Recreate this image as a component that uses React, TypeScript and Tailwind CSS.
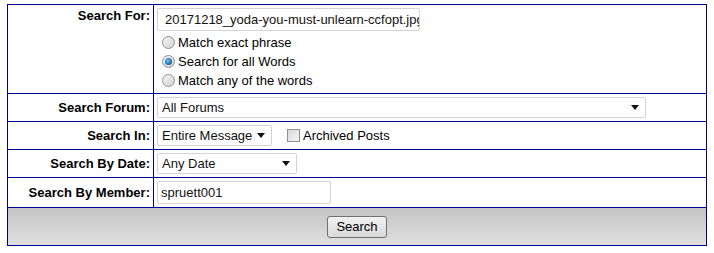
import React from "react";

const font = { fontFamily: '"Liberation Sans", Arial, sans-serif' };

function Radio({ checked }: { checked?: boolean }) {
  return (
    <span className="relative ml-[5px] mr-[3px] inline-block h-[13px] w-[13px] shrink-0 rounded-full border border-[#8f8f8f] bg-gradient-to-br from-[#f4f4f4] to-[#d2d2d2]">
      {checked && (
        <span className="absolute left-[2px] top-[2px] h-[7px] w-[7px] rounded-full bg-[radial-gradient(circle_at_40%_40%,#7cc4f2,#1a6fae_60%,#0b3f6e)]" />
      )}
    </span>
  );
}

function Arrow() {
  return (
    <svg width="8" height="5" viewBox="0 0 8 5" className="shrink-0">
      <path d="M0 0H8L4 5Z" fill="#111" />
    </svg>
  );
}

function Select({ text, w }: { text: string; w: string }) {
  return (
    <div
      className={`flex h-[21px] ${w} items-center justify-between rounded-[2px] border border-[#d4d4d4] bg-white pl-[4px] pr-[6px] text-[13px] text-[#111]`}
    >
      <span>{text}</span>
      <Arrow />
    </div>
  );
}

function Label({ children, top }: { children: React.ReactNode; top?: boolean }) {
  return (
    <div
      className={`flex w-[146px] shrink-0 justify-end border-r border-[#000099] pr-[3px] text-[13px] font-bold text-black ${
        top ? "items-start pt-[3px]" : "items-center"
      }`}
    >
      {children}
    </div>
  );
}

export default function App() {
  return (
    <div className="bg-white pl-[7px] pt-[4px] h-[253px]" style={font}>
      <div className="flex w-[700px] flex-col border border-[#000099] text-[13px] leading-[15px]">
        {/* Row 1 */}
        <div className="flex h-[89px] border-b border-[#000099]">
          <Label top>Search For:</Label>
          <div className="flex flex-col pl-[3px] pt-[3px]">
            <div className="flex h-[23px] w-[263px] items-center overflow-hidden whitespace-nowrap rounded-[2px] border border-[#d4d4d4] bg-white pl-[7px] text-[13px] text-[#111]">
              20171218_yoda-you-must-unlearn-ccfopt.jpg
            </div>
            <div className="mt-[2px] flex h-[19px] items-center">
              <Radio />
              <span>Match exact phrase</span>
            </div>
            <div className="flex h-[19px] items-center">
              <Radio checked />
              <span>Search for all Words</span>
            </div>
            <div className="flex h-[19px] items-center">
              <Radio />
              <span>Match any of the words</span>
            </div>
          </div>
        </div>
        {/* Row 2 */}
        <div className="flex h-[28px] border-b border-[#000099]">
          <Label>Search Forum:</Label>
          <div className="flex items-center pl-[3px]">
            <Select text="All Forums" w="w-[489px]" />
          </div>
        </div>
        {/* Row 3 */}
        <div className="flex h-[28px] border-b border-[#000099]">
          <Label>Search In:</Label>
          <div className="flex items-center pl-[3px]">
            <Select text="Entire Message" w="w-[115px]" />
            <span className="ml-[15px] mr-[3px] inline-block h-[13px] w-[13px] border border-[#8e8f8f] bg-gradient-to-br from-[#d8d8d8] to-[#f6f6f6]" />
            <span>Archived Posts</span>
          </div>
        </div>
        {/* Row 4 */}
        <div className="flex h-[28px] border-b border-[#000099]">
          <Label>Search By Date:</Label>
          <div className="flex items-center pl-[3px]">
            <Select text="Any Date" w="w-[140px]" />
          </div>
        </div>
        {/* Row 5 */}
        <div className="flex h-[30px] border-b border-[#000099]">
          <Label>Search By Member:</Label>
          <div className="flex items-center pl-[3px]">
            <div className="flex h-[23px] w-[174px] items-center rounded-[2px] border border-[#d4d4d4] bg-white pl-[3px] text-[13px] text-[#111]">
              spruett001
            </div>
          </div>
        </div>
        {/* Footer */}
        <div className="flex h-[37px] items-center justify-center bg-gradient-to-b from-[#c4c4c4] to-[#e0e0e0]">
          <button className="flex h-[22px] w-[60px] items-center justify-center rounded-[3px] border border-[#707070] bg-gradient-to-b from-[#f2f2f2] to-[#d9d9d9] text-[13px] text-black">
            Search
          </button>
        </div>
      </div>
    </div>
  );
}
